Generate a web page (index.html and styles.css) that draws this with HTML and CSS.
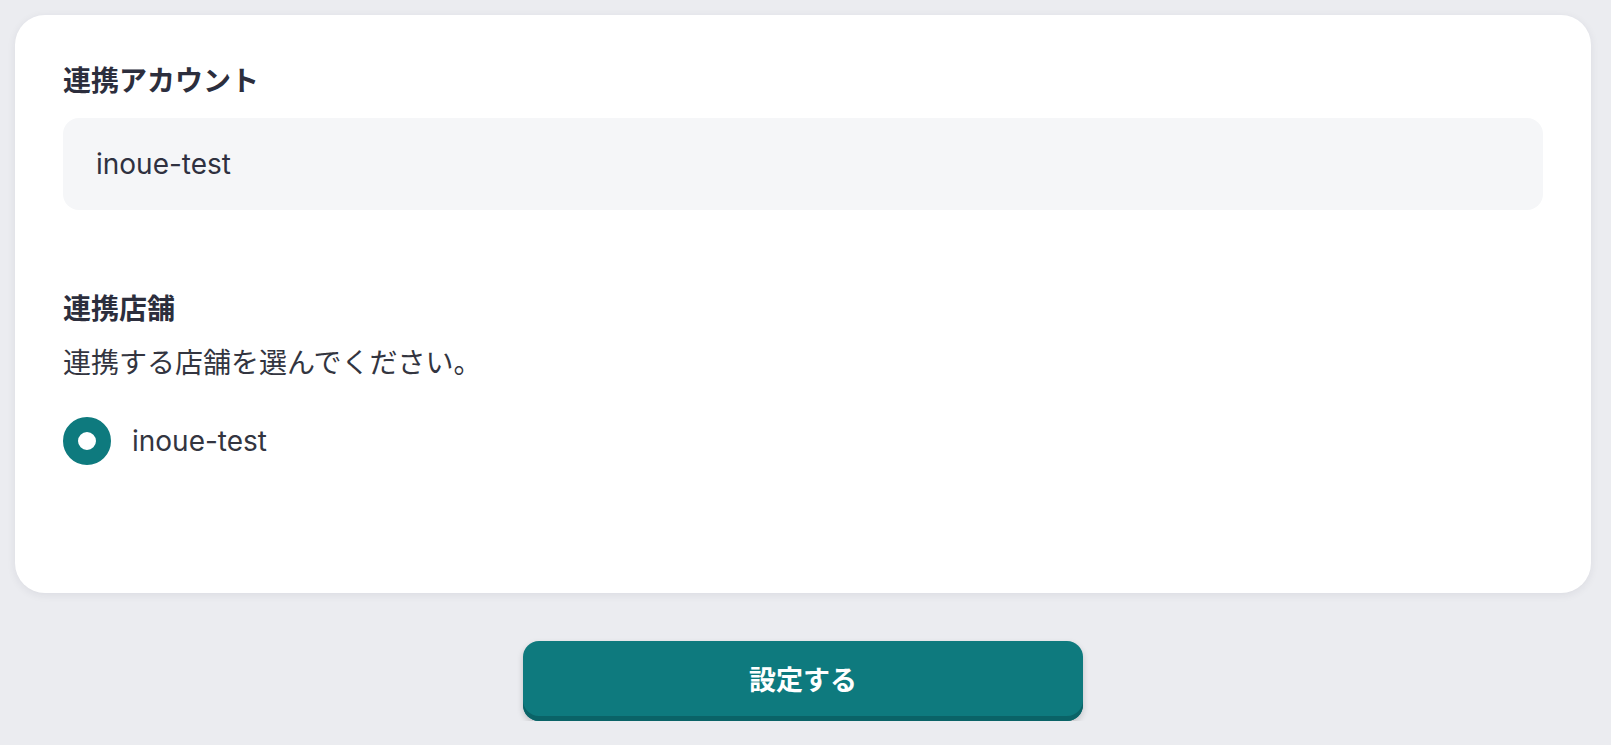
FILE: index.html
```html
<!DOCTYPE html>
<html lang="ja">
    <head>
        <meta charset="UTF-8" />
        <meta name="viewport" content="width=device-width, initial-scale=1.0" />
        <title>連携設定</title>

        <link rel="stylesheet" href="styles.css">
    </head>
    <body>
        <div class="page">
            <div class="card">
                <div class="field">
                    <h2 class="field_title">連携アカウント</h2>
                    <div class="account_box">inoue-test</div>
                </div>

                <div class="field shop_field">
                    <h2 class="field_title">連携店舗</h2>
                    <p class="field_note">連携する店舗を選んでください。</p>
                    <label class="radio_row">
                        <input type="radio" name="shop" value="inoue-test" checked />
                        <span class="radio_mark"></span>
                        <span>inoue-test</span>
                    </label>
                </div>
            </div>

            <div class="submit_wrap">
                <button class="submit_btn">設定する</button>
            </div>
        </div>
    </body>
</html>
```

FILE: styles.css
```css
body {
    margin: 0;
    font-family: "Inter", "Noto Sans CJK JP", sans-serif;
    background: #ebecf0;
    color: #2f3140;
}

.page {
    padding: 15px 20px 0 15px;
}

.card {
    background: #ffffff;
    border-radius: 30px;
    box-shadow: 0 2px 8px rgba(40, 44, 60, 0.08);
    padding: 48px 48px 128px;
}

.field {
    display: flex;
    flex-direction: column;
}

.field_title {
    margin: 0;
    font-size: 28px;
    line-height: 36px;
    font-weight: bold;
    color: #2c2e3d;
}

.account_box {
    margin-top: 19px;
    height: 92px;
    display: flex;
    align-items: center;
    padding: 0 33px;
    background: #f5f6f8;
    border-radius: 16px;
    font-size: 28px;
    color: #2f3140;
}

.shop_field {
    margin-top: 81px;
}

.field_note {
    margin: 18px 0 0;
    font-size: 28px;
    line-height: 36px;
    color: #333540;
}

.radio_row {
    margin-top: 36px;
    display: flex;
    align-items: center;
    gap: 21px;
    font-size: 28px;
    color: #333540;
    cursor: pointer;
}

.radio_row input {
    display: none;
}

.radio_mark {
    width: 48px;
    height: 48px;
    box-sizing: border-box;
    border-radius: 50%;
    border: 15px solid #0e7a7e;
    background: #ffffff;
}

.submit_wrap {
    display: flex;
    justify-content: center;
    margin-top: 48px;
}

.submit_btn {
    width: 560px;
    height: 80px;
    padding: 0 0 5px;
    border: none;
    border-radius: 16px;
    background: #0e7a7e;
    box-shadow: inset 0 -5px 0 #0a6367, 0 3px 6px rgba(0, 0, 0, 0.18);
    color: #ffffff;
    font-family: "Noto Sans CJK JP", sans-serif;
    font-size: 27px;
    font-weight: bold;
    cursor: pointer;
}
```
